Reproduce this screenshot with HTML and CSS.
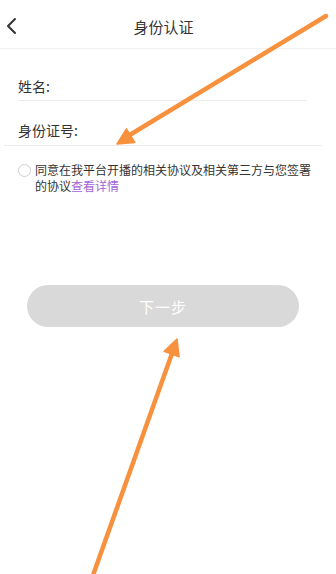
FILE: index.html
```html
<!DOCTYPE html>
<html lang="zh">
<head>
<meta charset="utf-8">
<title>身份认证</title>
<link rel="stylesheet" href="styles.css">
</head>
<body>
<div class="page">
  <header class="topbar">
    <div class="back">
      <svg width="12" height="18" viewBox="0 0 12 18"><polyline points="9,2 2,9 9,16" fill="none" stroke="#333" stroke-width="2" stroke-linecap="round" stroke-linejoin="round"/></svg>
    </div>
    <div class="title">身份认证</div>
    <div></div>
  </header>
  <main class="form">
    <div class="field field-name">姓名:</div>
    <div class="field field-id">身份证号:</div>
    <div class="agree">
      <span class="radio"></span>
      <p class="agree-text">同意在我平台开播的相关协议及相关第三方与您签署的协议<a class="link">查看详情</a></p>
    </div>
  </main>
  <div class="btn-wrap"><button class="next">下一步</button></div>
  <svg class="arrows" width="336" height="574" viewBox="0 0 336 574">
    <line x1="326" y1="16" x2="128" y2="136" stroke="#f7913d" stroke-width="4.5" stroke-linecap="round"/>
    <polygon points="117,144 126.4,128.9 134.8,142.5" fill="#f7913d" stroke="#f7913d" stroke-width="1.5" stroke-linejoin="round"/>
    <line x1="92" y1="578" x2="172.5" y2="352" stroke="#f7913d" stroke-width="4.5" stroke-linecap="round"/>
    <polygon points="177,339 179.1,356.8 164.1,351.4" fill="#f7913d" stroke="#f7913d" stroke-width="1.5" stroke-linejoin="round"/>
  </svg>
</div>
</body>
</html>
```
FILE: styles.css
```css
html, body {
  margin: 0;
  padding: 0;
  background: #fff;
}
body {
  font-family: "Noto Sans CJK SC", "Noto Sans", sans-serif;
  color: #333;
}
.page {
  position: relative;
  width: 336px;
  height: 574px;
  overflow: hidden;
}
.topbar {
  height: 48px;
  display: grid;
  grid-template-columns: 1fr auto 1fr;
  align-items: center;
  border-bottom: 1px solid #f0f0f0;
}
.back {
  padding-left: 6px;
  padding-top: 4px;
  display: flex;
  align-items: center;
}
.title {
  font-size: 15px;
  color: #333;
  padding-top: 4px;
  margin-right: 9px;
}
.form {
  padding: 0 29px 0 18px;
}
.field {
  font-size: 14px;
  line-height: 20px;
  color: #333;
  border-bottom: 1px solid #ececec;
}
.field-name {
  padding: 27px 0 4px;
}
.field-id {
  padding: 19px 0 5px 14px;
  margin: 0 -15px 0 -14px;
}
.agree {
  display: flex;
  align-items: flex-start;
  gap: 4px;
  margin-top: 16px;
  margin-right: -20px;
}
.radio {
  flex: none;
  width: 11px;
  height: 11px;
  border: 1px solid #cfcfcf;
  border-radius: 50%;
  margin-top: 2px;
}
.agree-text {
  margin: 0;
  width: 285px;
  font-size: 12px;
  line-height: 15.5px;
  color: #333;
}
.link {
  color: #a463d8;
}
.btn-wrap {
  padding: 92px 37px 0 27px;
}
.next {
  display: block;
  width: 272px;
  height: 42px;
  border: none;
  border-radius: 21px;
  background: #d9d9d9;
  color: #fff;
  font-family: "Noto Sans CJK SC", sans-serif;
  font-size: 15px;
  letter-spacing: 1px;
}
.arrows {
  position: absolute;
  left: 0;
  top: 0;
  pointer-events: none;
}
```
